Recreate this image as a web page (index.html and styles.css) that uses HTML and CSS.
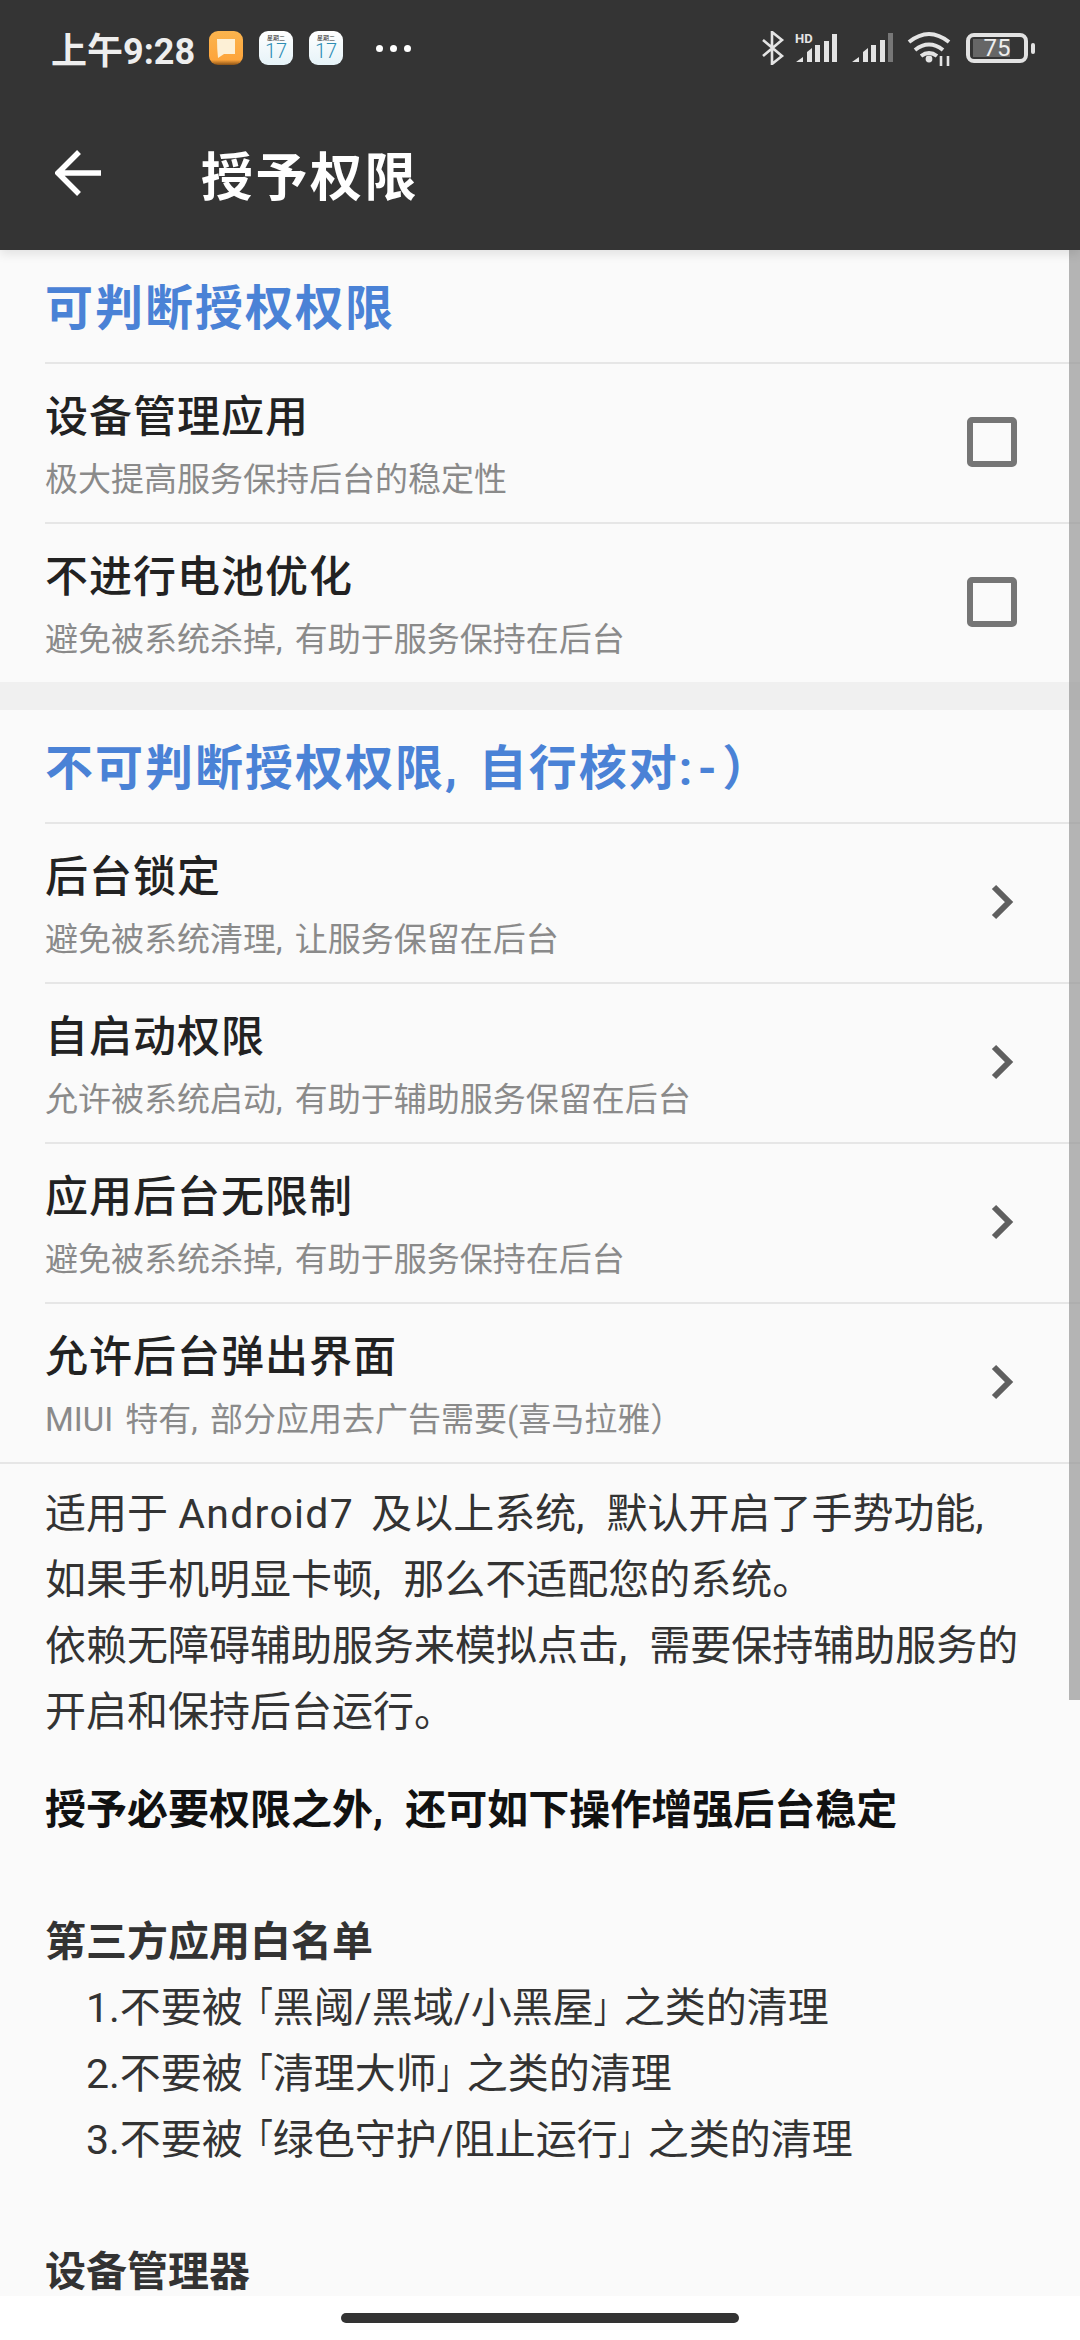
FILE: index.html
```html
<!DOCTYPE html>
<html lang="zh-CN">
    <head>
        <meta charset="utf-8" />
        <meta name="viewport" content="width=device-width, initial-scale=1" />
        <title>授予权限</title>
        <link rel="stylesheet" href="styles.css">
    </head>
    <body>
        <header class="appbar">
            <div class="status">
                <span class="time">上午9:28</span>
                <svg class="notif" width="34" height="34" viewBox="0 0 34 34">
                    <defs>
                        <linearGradient id="orange" x1="0" y1="0" x2="0" y2="1">
                            <stop offset="0" stop-color="#fbb44e"/>
                            <stop offset="0.85" stop-color="#fda53c"/>
                            <stop offset="1" stop-color="#8a5216"/>
                        </linearGradient>
                    </defs>
                    <rect width="34" height="34" rx="9" fill="url(#orange)"/>
                    <path d="M8 8h18v15H15l-6 4q-1-9-1-19z" fill="#fdf0d6"/>
                </svg>
                <span class="cal"><small>星期二</small><b>17</b></span>
                <span class="cal"><small>星期二</small><b>17</b></span>
                <span class="dots"><i></i><i></i><i></i></span>
                <span class="status-right">
                    <svg width="24" height="34" viewBox="0 0 24 34" fill="none" stroke="#e4e4e4" stroke-width="2.6">
                        <path d="M2 9l19 16-10 8V1l10 8L2 25"/>
                    </svg>
                    <svg class="sig-hd" width="44" height="32" viewBox="0 0 44 32" fill="#e4e4e4">
                        <text x="0" y="11" class="hd">HD</text>
                        <path d="M1 30l7-5v5zM12 30V20l5-4v14zM20 30V13h5v17zM29 30V9h5v21zM37 30V2h5v28z"/>
                    </svg>
                    <svg class="sig" width="42" height="30" viewBox="0 0 42 30" fill="#e4e4e4">
                        <path d="M0 29l7-5v5zM11 29V19l5-4v14zM19 29V12h5v17zM28 29V7h5v22z"/>
                        <path d="M36 29V0h5v29z" fill="#777"/>
                    </svg>
                    <svg class="wifi" width="46" height="36" viewBox="0 0 46 36" fill="none" stroke="#e4e4e4" stroke-width="4">
                        <path d="M2 12q20-16 40 0M8 20q14-11 28 0M14 26q8-6 16 0"/>
                        <circle cx="22" cy="29" r="3.4" fill="#e4e4e4" stroke="none"/>
                        <path d="M34 36v-10M41 36v-10" stroke-width="2.6"/>
                    </svg>
                    <span class="battery"><span class="battery-body"><span class="battery-fill"></span><em>75</em></span><span class="battery-nub"></span></span>
                </span>
            </div>
            <div class="toolbar">
                <svg class="back" width="46" height="46" viewBox="0 0 46 46" fill="none" stroke="#fff" stroke-width="5.5">
                    <path d="M46 23H4M24 2L3 23l21 21"/>
                </svg>
                <h1>授予权限</h1>
            </div>
        </header>

        <main class="content">
            <div class="scrollbar"></div>

            <h2 class="sec-title">可判断授权权限</h2>
            <div class="row">
                <div class="row-text">
                    <p class="row-title">设备管理应用</p>
                    <p class="row-sub">极大提高服务保持后台的稳定性</p>
                </div>
                <span class="check"></span>
            </div>
            <div class="row">
                <div class="row-text">
                    <p class="row-title">不进行电池优化</p>
                    <p class="row-sub">避免被系统杀掉, 有助于服务保持在后台</p>
                </div>
                <span class="check"></span>
            </div>

            <div class="band"></div>

            <h2 class="sec-title">不可判断授权权限, 自行核对<span class="smile">:-</span>）</h2>
            <div class="row">
                <div class="row-text">
                    <p class="row-title">后台锁定</p>
                    <p class="row-sub">避免被系统清理, 让服务保留在后台</p>
                </div>
                <svg class="chev" width="24" height="36" viewBox="0 0 24 36" fill="none" stroke="#5f5f5f" stroke-width="6"><path d="M4 3l15 15L4 33"/></svg>
            </div>
            <div class="row">
                <div class="row-text">
                    <p class="row-title">自启动权限</p>
                    <p class="row-sub">允许被系统启动, 有助于辅助服务保留在后台</p>
                </div>
                <svg class="chev" width="24" height="36" viewBox="0 0 24 36" fill="none" stroke="#5f5f5f" stroke-width="6"><path d="M4 3l15 15L4 33"/></svg>
            </div>
            <div class="row">
                <div class="row-text">
                    <p class="row-title">应用后台无限制</p>
                    <p class="row-sub">避免被系统杀掉, 有助于服务保持在后台</p>
                </div>
                <svg class="chev" width="24" height="36" viewBox="0 0 24 36" fill="none" stroke="#5f5f5f" stroke-width="6"><path d="M4 3l15 15L4 33"/></svg>
            </div>
            <div class="row">
                <div class="row-text">
                    <p class="row-title">允许后台弹出界面</p>
                    <p class="row-sub">MIUI 特有, 部分应用去广告需要(喜马拉雅）</p>
                </div>
                <svg class="chev" width="24" height="36" viewBox="0 0 24 36" fill="none" stroke="#5f5f5f" stroke-width="6"><path d="M4 3l15 15L4 33"/></svg>
            </div>

            <div class="notes">
                <p><span class="latin">适用于 </span><span class="android">Android7</span><span class="after"> </span>及以上系统, 默认开启了手势功能,</p>
                <p>如果手机明显卡顿, 那么不适配您的系统。</p>
                <p>依赖无障碍辅助服务来模拟点击, 需要保持辅助服务的</p>
                <p>开启和保持后台运行。</p>
                <p class="lead">授予必要权限之外, 还可如下操作增强后台稳定</p>
                <p class="gap sub-head">第三方应用白名单</p>
                <p class="item">1.不要被<span class="bracket">「</span>黑阈/黑域/小黑屋<span class="bracket">」</span>之类的清理</p>
                <p class="item">2.不要被<span class="bracket">「</span>清理大师<span class="bracket">」</span>之类的清理</p>
                <p class="item">3.不要被<span class="bracket">「</span>绿色守护/阻止运行<span class="bracket">」</span>之类的清理</p>
                <p class="gap sub-head">设备管理器</p>
            </div>
        </main>

        <div class="navbar"><span class="home"></span></div>
    </body>
</html>
```

FILE: styles.css
```css
* { margin: 0; padding: 0; box-sizing: border-box; }

html, body { width: 1080px; height: 2340px; overflow: hidden; }

body {
    display: flex;
    flex-direction: column;
    font-family: Roboto, "Noto Sans CJK SC", sans-serif;
    background: #fafafa;
}

/* top bar */
.appbar {
    position: relative;
    z-index: 2;
    height: 250px;
    flex: none;
    background: #343434;
    box-shadow: 0 4px 10px rgba(0,0,0,.1);
}

.status {
    display: flex;
    align-items: center;
    height: 96px;
    padding: 0 45px 0 51px;
}
.time { font-size: 36px; font-weight: 700; color: #eee; width: 158px; white-space: nowrap; }
.notif { margin-right: 16px; }
.cal {
    display: flex;
    flex-direction: column;
    align-items: center;
    width: 34px;
    height: 34px;
    margin-right: 16px;
    padding-top: 3px;
    background: linear-gradient(#fff, #e6f3f8);
    border-radius: 9px;
    overflow: hidden;
}
.cal small { font-size: 6px; line-height: 7px; color: #333; }
.cal b { font-size: 20px; line-height: 20px; font-weight: 300; color: #2d8db5; }
.dots { display: flex; gap: 7px; margin-left: 17px; }
.dots i { width: 7px; height: 7px; background: #fff; border-radius: 50%; }

.status-right { display: flex; align-items: center; margin-left: auto; gap: 13px; }
.status-right svg:first-child { margin-right: -3px; }
.hd { font-size: 13px; font-weight: 700; font-family: Roboto, sans-serif; }
.battery { display: flex; align-items: center; gap: 3px; }
.battery-body {
    position: relative;
    display: flex;
    align-items: center;
    justify-content: center;
    width: 62px;
    height: 30px;
    border: 4px solid #e2e2e2;
    border-radius: 8px;
}
.battery-fill { position: absolute; left: 3px; top: 2px; bottom: 2px; width: 37px; background: #666; }
.battery-body em { position: relative; font-size: 24px; font-style: normal; color: #eee; }
.battery-nub { width: 4px; height: 11px; background: #e2e2e2; border-radius: 2px; }

.toolbar { display: flex; align-items: center; height: 154px; padding-left: 55px; }
.back { margin-right: 100px; }
.toolbar h1 { font-size: 52px; font-weight: 700; color: #fff; letter-spacing: 2.5px; }

/* list */
.content { position: relative; flex: 1; overflow: hidden; }
.scrollbar { position: absolute; right: 0; top: 0; width: 11px; height: 1450px; background: rgba(150,150,150,.7); }

.sec-title {
    height: 112px;
    padding-left: 45px;
    font-size: 48px;
    line-height: 118px;
    font-weight: 700;
    letter-spacing: 2px;
    word-spacing: 6px;
    color: #4a82d6;
}
.smile { letter-spacing: 5.5px; }

.row {
    display: flex;
    align-items: center;
    justify-content: space-between;
    height: 160px;
    margin-left: 45px;
    padding-right: 63px;
    border-top: 2px solid #e6e6e6;
}
.row-text { padding-top: 6px; }
.row-title { font-size: 43px; line-height: 60px; font-weight: 500; letter-spacing: 1px; color: #222; }
.row-sub { margin-top: 8px; font-size: 33px; line-height: 50px; word-spacing: 4px; color: #8a8a8a; white-space: nowrap; }

.check { width: 50px; height: 50px; margin-bottom: 2px; border: 6px solid #757575; border-radius: 5px; }
.chev { margin: 0 3px 3px 0; }

.band { height: 28px; background: #f0f0f0; }

/* free text */
.notes {
    padding: 17px 0 0 45px;
    border-top: 2px solid #e6e6e6;
    font-size: 41px;
    line-height: 66px;
    word-spacing: 12px;
    color: #333;
    white-space: nowrap;
}
.notes p { height: 66px; }
.notes .latin { word-spacing: 0; }
.notes .android { letter-spacing: 1.3px; }
.notes .after { word-spacing: 7px; }
.notes .lead { margin-top: 32px; font-weight: 700; color: #111; }
.notes .gap { margin-top: 66px; }
.notes .sub-head { font-weight: 700; color: #333; }
.notes .item { padding-left: 41px; }

/* corner brackets are narrower than a full em in the reference */
.bracket {
    display: inline-block;
    font-size: 30px;
    line-height: 30px;
    vertical-align: 4px;
    transform: scaleY(1.35);
}

.navbar {
    display: flex;
    justify-content: center;
    flex: none;
    height: 44px;
    padding-top: 17px;
    background: #fff;
}
.home { width: 398px; height: 10px; background: #333; border-radius: 5px; }
```
